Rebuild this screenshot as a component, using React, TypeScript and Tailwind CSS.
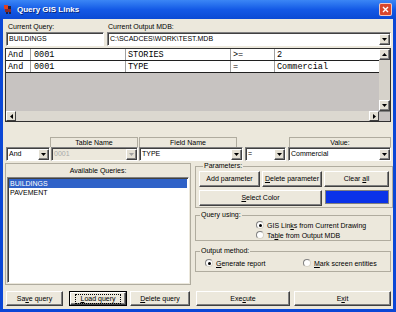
import React from "react";

const raised =
  "border border-t-white border-l-white border-r-[#404040] border-b-[#404040] shadow-[inset_-1px_-1px_0_#808080]";
const sunken =
  "border border-t-[#808080] border-l-[#808080] border-r-white border-b-white shadow-[inset_1px_1px_0_#404040]";

function Tri({ dir, color = "#000" }: { dir: "down" | "up" | "left" | "right"; color?: string }) {
  if (dir === "down")
    return (
      <svg width="5" height="3" viewBox="0 0 5 3">
        <polygon points="0,0 5,0 2.5,3" fill={color} />
      </svg>
    );
  if (dir === "up")
    return (
      <svg width="5" height="3" viewBox="0 0 5 3">
        <polygon points="0,3 5,3 2.5,0" fill={color} />
      </svg>
    );
  if (dir === "left")
    return (
      <svg width="3" height="5" viewBox="0 0 3 5">
        <polygon points="3,0 3,5 0,2.5" fill={color} />
      </svg>
    );
  return (
    <svg width="3" height="5" viewBox="0 0 3 5">
      <polygon points="0,0 0,5 3,2.5" fill={color} />
    </svg>
  );
}

function ArrowBtn({ dir, disabled }: { dir: "down" | "up" | "left" | "right"; disabled?: boolean }) {
  return (
    <div className={`w-[11px] h-[11px] shrink-0 bg-[#e4e0d4] flex items-center justify-center ${raised}`}>
      <Tri dir={dir} color={disabled ? "#a0a0a0" : "#000"} />
    </div>
  );
}

function Combo({ text, className, disabled }: { text: string; className: string; disabled?: boolean }) {
  return (
    <div
      className={`h-[14px] flex items-center ${sunken} ${disabled ? "bg-[#ece8dc] text-[#a8a8a8]" : "bg-white text-black"} ${className}`}
    >
      <div className="flex-1 pl-[2px] leading-[10px] truncate">{text}</div>
      <ArrowBtn dir="down" disabled={disabled} />
    </div>
  );
}

function Btn({ children, className }: { children: React.ReactNode; className: string }) {
  return (
    <div className={`flex items-center justify-center bg-[#ece8dc] leading-[10px] ${raised} ${className}`}>
      {children}
    </div>
  );
}

function Radio({ checked }: { checked?: boolean }) {
  return (
    <span className="w-[8px] h-[8px] rounded-full bg-white border border-t-[#808080] border-l-[#808080] border-r-[#d8d4c8] border-b-[#d8d4c8] flex items-center justify-center shrink-0">
      {checked && <span className="w-[3px] h-[3px] rounded-full bg-black" />}
    </span>
  );
}

function Cell({ children, w, last }: { children?: React.ReactNode; w: string; last?: boolean }) {
  return (
    <div
      className={`${w} h-full pl-[2px] flex items-center ${last ? "" : "border-r border-[#a0a0a0]"} font-['Liberation_Mono',monospace] text-[8.5px] leading-[10px]`}
    >
      {children}
    </div>
  );
}

function Row({ a, b, c, d, e }: { a: string; b: string; c: string; d: string; e: string }) {
  return (
    <div className="h-[12px] flex border-b border-[#202020] bg-white">
      <Cell w="w-[25px]">{a}</Cell>
      <Cell w="w-[95px]">
        <span className="pl-[1px]">{b}</span>
      </Cell>
      <Cell w="w-[105px]">{c}</Cell>
      <Cell w="w-[44px]">{d}</Cell>
      <Cell w="flex-1" last>
        {e}
      </Cell>
    </div>
  );
}

export default function App() {
  return (
    <div className="w-[396px] h-[312px] bg-[#0b47d6] flex flex-col font-['Liberation_Sans',Arial,sans-serif] text-[7px] text-black overflow-hidden select-none">
      {/* Title bar */}
      <div className="h-[19px] flex items-center bg-gradient-to-b from-[#3b86f5] via-[#1459e6] to-[#0b4ad4] pl-[3px] pr-[4px]">
        <svg width="11" height="11" viewBox="0 0 11 11" className="shrink-0">
          <rect x="1" y="1" width="4" height="4" fill="#e04020" />
          <rect x="5" y="2" width="3" height="3" fill="#202040" />
          <rect x="2" y="5" width="6" height="3" fill="#8a2a2a" />
          <rect x="3" y="8" width="2" height="2" fill="#202040" />
          <rect x="6" y="8" width="2" height="2" fill="#202040" />
        </svg>
        <div className="ml-[3px] text-white font-bold text-[8px] leading-[10px] [text-shadow:1px_1px_0_#0a2a80]">
          Query GIS Links
        </div>
        <div className="flex-1" />
        <div className="w-[13px] h-[13px] bg-[#d8462c] border border-white/70 rounded-[2px] flex items-center justify-center">
          <svg width="7" height="7" viewBox="0 0 7 7">
            <path d="M1 1 L6 6 M6 1 L1 6" stroke="#fff" strokeWidth="1.4" />
          </svg>
        </div>
      </div>

      {/* Body */}
      <div className="flex-1 mx-[3px] mb-[3px] bg-[#ece8dc] px-[2px] pt-[3px] pb-[3px] flex flex-col">
        {/* Current query / output mdb */}
        <div className="flex">
          <div className="ml-[1px] w-[98px] flex flex-col">
            <div className="h-[9px] leading-[9px] pl-[2px]">Current Query:</div>
            <div className={`mt-[1px] h-[14px] bg-white flex items-center pl-[2px] leading-[10px] ${sunken}`}>
              BUILDINGS
            </div>
          </div>
          <div className="ml-[3px] w-[284px] flex flex-col">
            <div className="h-[9px] leading-[9px] pl-[1px]">Current Output MDB:</div>
            <Combo text="C:\SCADCES\WORK\TEST.MDB" className="mt-[1px] w-full" />
          </div>
        </div>

        {/* Grid */}
        <div className="mt-[2px] w-[386px] h-[74px] border border-[#303030] flex">
          <div className="w-[373px] flex flex-col">
            <Row a="And" b="0001" c="STORIES" d=">=" e="2" />
            <Row a="And" b="0001" c="TYPE" d="=" e="Commercial" />
            <div className="flex-1 bg-[#c7c3c1]" />
            <div className="h-[10px] flex bg-[#dcd8d0]">
              <div className="w-[10px] h-[10px] bg-[#e4e0d4] flex items-center justify-center border border-t-white border-l-white border-r-[#404040] border-b-[#404040]">
                <Tri dir="left" />
              </div>
              <div className="flex-1" />
              <div className="w-[10px] h-[10px] bg-[#e4e0d4] flex items-center justify-center border border-t-white border-l-white border-r-[#404040] border-b-[#404040]">
                <Tri dir="right" />
              </div>
            </div>
          </div>
          <div className="flex-1 flex flex-col bg-[#d6d2ca]">
            <ArrowBtn dir="up" />
            <div className="flex-1" />
            <ArrowBtn dir="down" />
            <div className="h-[10px] bg-[#c7c3c1] border-t border-[#808080]" />
          </div>
        </div>

        {/* Header row */}
        <div className="mt-[15px] h-[10px] flex">
          <div className="ml-[45px] w-[88px] h-full border-t border-l border-r border-[#b0ac9f] text-center leading-[9px]">
            Table Name
          </div>
          <div className="ml-[1px] w-[98px] h-full border-t border-l border-r border-[#b0ac9f] text-center leading-[9px]">
            Field Name
          </div>
          <div className="ml-[52px] w-[102px] h-full border-t border-l border-r border-[#b0ac9f] text-center leading-[9px]">
            Value:
          </div>
        </div>

        {/* Select row */}
        <div className="h-[14px] flex">
          <Combo text="And" className="ml-[1px] w-[44px]" />
          <Combo text="0001" className="ml-[1px] w-[87px]" disabled />
          <Combo text="TYPE" className="ml-[1px] w-[104px]" />
          <Combo text="=" className="ml-[2px] w-[41px]" />
          <Combo text="Commercial" className="ml-[2px] w-[103px]" />
        </div>

        {/* Groups */}
        <div className="mt-[1px] h-[124px] flex">
          <div className="mt-[1px] w-[187px] h-[122px] border border-[#b0ac9f] flex flex-col">
            <div className="h-[13px] text-center leading-[13px]">Available Queries:</div>
            <div className={`mx-[1px] mb-[1px] flex-1 bg-white pt-[1px] leading-[9px] ${sunken}`}>
              <div className="h-[9px] bg-[#2f62c8] text-white pl-[1px] mx-[1px]">BUILDINGS</div>
              <div className="h-[9px] pl-[2px]">PAVEMENT</div>
            </div>
          </div>

          <div className="ml-[3px] w-[197px] flex flex-col">
            <fieldset className="ml-[1px] border border-[#b0ac9f] px-[3px] pt-[1px] pb-[1px]">
              <legend className="ml-[4px] px-[1px] leading-[8px]">Parameters:</legend>
              <div className="flex">
                <Btn className="w-[61px] h-[16px]">Add parameter</Btn>
                <Btn className="ml-[2px] w-[60px] h-[16px]">
                  <span>
                    <span className="underline">D</span>elete parameter
                  </span>
                </Btn>
                <Btn className="ml-[2px] w-[65px] h-[16px]">
                  <span>
                    Clear <span className="underline">a</span>ll
                  </span>
                </Btn>
              </div>
              <div className="mt-[3px] flex">
                <Btn className="w-[123px] h-[16px]">
                  <span>
                    <span className="underline">S</span>elect Color
                  </span>
                </Btn>
                <div className="ml-[3px] w-[64px] h-[14px] bg-[#0a32e8] border border-[#808080]" />
              </div>
            </fieldset>

            <fieldset className="mt-[3px] ml-[1px] border border-[#b0ac9f] pt-[1px]">
              <legend className="ml-[4px] px-[1px] leading-[8px]">Query using:</legend>
              <div className="h-[10px] flex items-center pl-[60px]">
                <Radio checked />
                <span className="ml-[3px] leading-[9px]">
                  GIS Lin<span className="underline">k</span>s from Current Drawing
                </span>
              </div>
              <div className="h-[10px] flex items-center pl-[60px]">
                <Radio />
                <span className="ml-[3px] leading-[9px]">
                  Ta<span className="underline">b</span>le from Output MDB
                </span>
              </div>
            </fieldset>

            <fieldset className="mt-[6px] ml-[1px] border border-[#b0ac9f] pt-[3px] pb-[3px]">
              <legend className="ml-[4px] px-[1px] leading-[8px]">Output method:</legend>
              <div className="h-[10px] flex items-center">
                <div className="w-[107px] flex items-center pl-[9px]">
                  <Radio checked />
                  <span className="ml-[3px] leading-[9px]">
                    <span className="underline">G</span>enerate report
                  </span>
                </div>
                <Radio />
                <span className="ml-[3px] leading-[9px]">
                  <span className="underline">M</span>ark screen entities
                </span>
              </div>
            </fieldset>
          </div>
        </div>

        {/* Bottom buttons */}
        <div className="mt-[5px] h-[15px] flex ml-[1px]">
          <Btn className="w-[57px] h-full">
            <span>
              Sa<span className="underline">v</span>e query
            </span>
          </Btn>
          <div className="ml-[6px] w-[58px] h-full border border-black">
            <div className={`w-full h-full bg-[#ece8dc] flex items-center justify-center ${raised}`}>
              <span className="border border-dotted border-black px-[4px] leading-[8px]">
                <span className="underline">L</span>oad query
              </span>
            </div>
          </div>
          <Btn className="ml-[3px] w-[60px] h-full">
            <span>
              <span className="underline">D</span>elete query
            </span>
          </Btn>
          <Btn className="ml-[6px] w-[94px] h-full">
            <span>
              Exe<span className="underline">c</span>ute
            </span>
          </Btn>
          <Btn className="ml-[4px] w-[97px] h-full">
            <span>
              E<span className="underline">x</span>it
            </span>
          </Btn>
        </div>
      </div>
    </div>
  );
}
